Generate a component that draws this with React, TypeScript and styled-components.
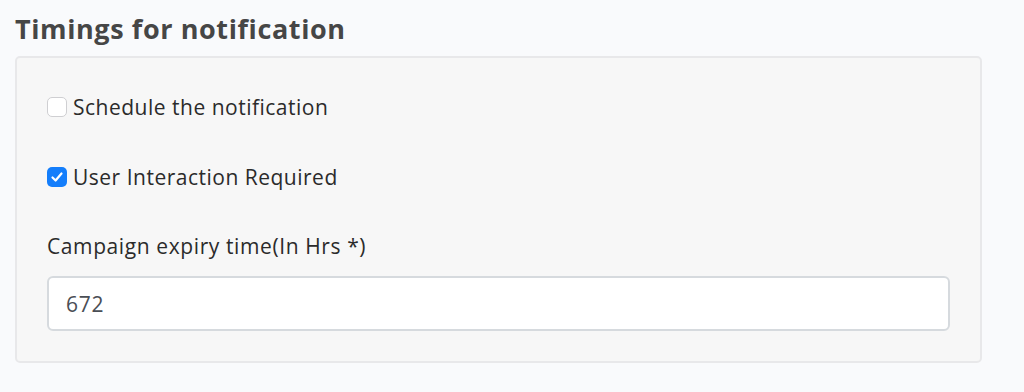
import React from "react";
import styled, { createGlobalStyle } from "styled-components";

const Global = createGlobalStyle`
  html, body { margin: 0; padding: 0; background: #f9fafc; }
  body { font-family: "Open Sans", Lato, sans-serif; color: #333; }
  * { box-sizing: border-box; }
`;

const Page = styled.div`
  padding: 14px 42px 0 15px;
  width: 1024px;
`;

const Title = styled.h2`
  margin: 0 0 12px 0;
  font-size: 27px;
  line-height: 30px;
  letter-spacing: 0.6px;
  font-weight: 700;
  color: #464646;
`;

const Panel = styled.div`
  background: #f7f7f7;
  border: 2px solid #e8e8ea;
  border-radius: 5px;
  padding: 37px 30px 30px 30px;
  display: flex;
  flex-direction: column;
`;

const CheckRow = styled.label<{ $mb: number }>`
  display: flex;
  align-items: center;
  gap: 6px;
  height: 24px;
  margin-bottom: ${(p) => p.$mb}px;
  font-size: 21px;
  letter-spacing: 0.5px;
  color: #2b2b2b;
`;

const Box = styled.span<{ $checked: boolean }>`
  width: 20px;
  height: 20px;
  border-radius: 5px;
  flex: none;
  display: flex;
  align-items: center;
  justify-content: center;
  background: ${(p) => (p.$checked ? "#147efb" : "#ffffff")};
  border: ${(p) => (p.$checked ? "none" : "1px solid #cfcfd2")};
`;

const FieldLabel = styled.div`
  font-size: 21px;
  letter-spacing: 0.6px;
  line-height: 24px;
  color: #2b2b2b;
  margin-bottom: 18px;
`;

const Input = styled.input`
  width: 100%;
  height: 55px;
  border: 2px solid #d6dade;
  border-radius: 6px;
  background: #fff;
  padding: 0 17px;
  font-family: "Open Sans", Lato, sans-serif;
  font-size: 21px;
  letter-spacing: 0.8px;
  color: #4a4e55;
  outline: none;
`;

function Check({ checked }: { checked: boolean }) {
  return (
    <Box $checked={checked}>
      {checked && (
        <svg width="14" height="14" viewBox="0 0 14 14">
          <path d="M2.5 7.5 L5.6 10.5 L11.5 3.5" fill="none" stroke="#fff" strokeWidth="2.2" strokeLinecap="round" strokeLinejoin="round" />
        </svg>
      )}
    </Box>
  );
}

export default function App() {
  return (
    <>
      <Global />
      <Page>
        <Title>Timings for notification</Title>
        <Panel>
          <CheckRow $mb={46}>
            <Check checked={false} />
            Schedule the notification
          </CheckRow>
          <CheckRow $mb={45}>
            <Check checked={true} />
            User Interaction Required
          </CheckRow>
          <FieldLabel>Campaign expiry time(In Hrs *)</FieldLabel>
          <Input defaultValue="672" />
        </Panel>
      </Page>
    </>
  );
}
